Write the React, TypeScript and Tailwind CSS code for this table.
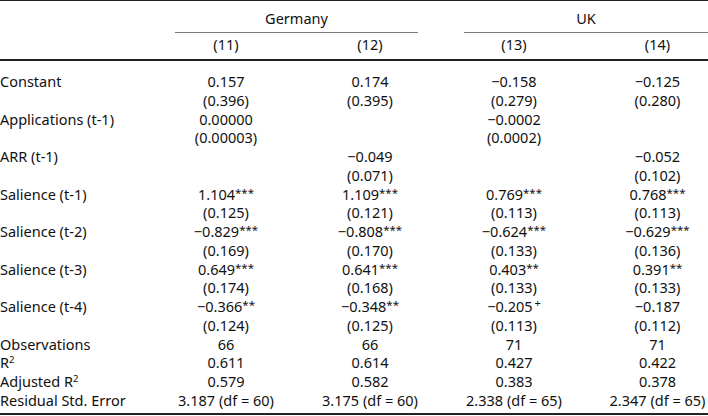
import React from 'react';

type Row = {
  label: React.ReactNode;
  values: string[];
};

const R2 = (
  <>
    R<span className="relative -top-[5px] text-[9.5px] leading-none">2</span>
  </>
);

const rows: Row[] = [
  { label: 'Constant', values: ['0.157', '0.174', '−0.158', '−0.125'] },
  { label: '', values: ['(0.396)', '(0.395)', '(0.279)', '(0.280)'] },
  { label: 'Applications (t-1)', values: ['0.00000', '', '−0.0002', ''] },
  { label: '', values: ['(0.00003)', '', '(0.0002)', ''] },
  { label: 'ARR (t-1)', values: ['', '−0.049', '', '−0.052'] },
  { label: '', values: ['', '(0.071)', '', '(0.102)'] },
  { label: 'Salience (t-1)', values: ['1.104***', '1.109***', '0.769***', '0.768***'] },
  { label: '', values: ['(0.125)', '(0.121)', '(0.113)', '(0.113)'] },
  { label: 'Salience (t-2)', values: ['−0.829***', '−0.808***', '−0.624***', '−0.629***'] },
  { label: '', values: ['(0.169)', '(0.170)', '(0.133)', '(0.136)'] },
  { label: 'Salience (t-3)', values: ['0.649***', '0.641***', '0.403**', '0.391**'] },
  { label: '', values: ['(0.174)', '(0.168)', '(0.133)', '(0.133)'] },
  { label: 'Salience (t-4)', values: ['−0.366**', '−0.348**', '−0.205+', '−0.187'] },
  { label: '', values: ['(0.124)', '(0.125)', '(0.113)', '(0.112)'] },
  { label: 'Observations', values: ['66', '66', '71', '71'] },
  { label: R2, values: ['0.611', '0.614', '0.427', '0.422'] },
  { label: <>Adjusted {R2}</>, values: ['0.579', '0.582', '0.383', '0.378'] },
  {
    label: 'Residual Std. Error',
    values: ['3.187 (df = 60)', '3.175 (df = 60)', '2.338 (df = 65)', '2.347 (df = 65)'],
  },
];

// splits the significance marks off the end of an estimate
function Value({ text }: { text: string }) {
  const m = text.match(/^(.*?)(\*+|\+)?$/);
  const base = m ? m[1] : text;
  const mark = m ? m[2] : undefined;

  return (
    <>
      {base}
      {mark === '+' && (
        <span className="relative -top-[5px] ml-[2px] text-[11px] leading-none">+</span>
      )}
      {mark && mark !== '+' && (
        <span className="relative -top-[3px] text-[11.5px] leading-none">{mark}</span>
      )}
    </>
  );
}

const cols = 'grid grid-cols-[133px_102px_102px_102px_101px] gap-x-[42px]';

export default function App() {
  return (
    <div className="w-[708px] h-[416px] overflow-hidden bg-white text-[#111] font-['Noto_Sans',sans-serif] text-[14.5px]">
      <div className="h-px bg-[#222]" />

      <div className={`${cols} leading-[19px] pt-[8px]`}>
        <div />
        <div className="col-span-2 text-center pb-[4px] mr-[3px] border-b border-[#7a7a7a]">Germany</div>
        <div className="col-span-2 text-center pb-[4px] ml-[1px] border-b border-[#7a7a7a]">UK</div>
      </div>

      <div className={`${cols} leading-[19px] pt-[2px] pb-[5px]`}>
        <div />
        {['(11)', '(12)', '(13)', '(14)'].map((h) => (
          <div key={h} className="h-[19px] text-center">
            {h}
          </div>
        ))}
      </div>

      <div className="h-[2px] bg-[#222]" />

      <div className={`${cols} auto-rows-[18.75px] leading-[18.75px] pt-[11px] pb-[3.5px]`}>
        {rows.map((row, i) => (
          <React.Fragment key={i}>
            <div className="h-[18.75px] whitespace-nowrap">{row.label}</div>
            {row.values.map((v, j) => (
              <div key={j} className="h-[18.75px] text-center whitespace-nowrap">
                <Value text={v} />
              </div>
            ))}
          </React.Fragment>
        ))}
      </div>

      <div className="h-[2px] bg-[#222]" />
    </div>
  );
}
